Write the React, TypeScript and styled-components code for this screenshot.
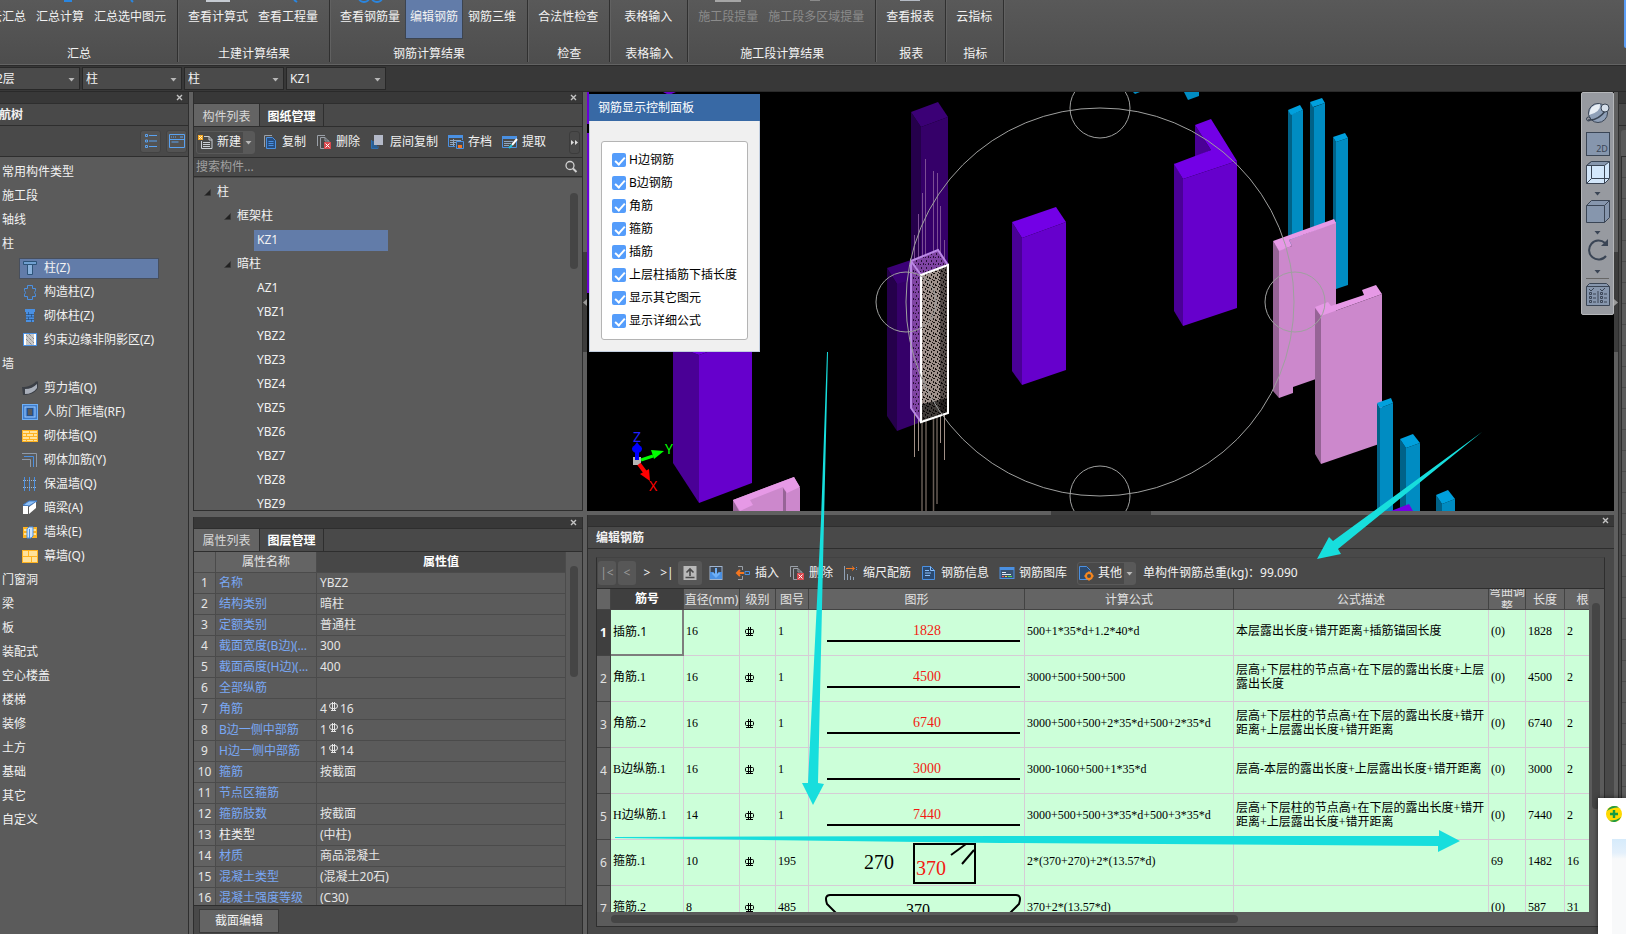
import React from "react";
import styled, { createGlobalStyle, css } from "styled-components";

const c = {
  line: "#2e2e2e",
  strip: "#383838",
  bar: "#494949",
  body: "#5b5b5b",
  head: "#646464",
  grid: "#4b4b4b",
  text: "#f2f2f2",
  select: "#627ca9",
  blue: "#4a90e2",
  link: "#79a8f5",
  mint: "#ccffd9",
  cyan: "#17dedd",
};

const ui = `"Noto Sans", "Noto Sans CJK SC", sans-serif`;
const song = `"Liberation Serif", "Noto Sans CJK SC", serif`;

const Global = createGlobalStyle`
  * { box-sizing: border-box; }
  body { margin: 0; background: ${c.bar}; color: ${c.text}; font: 12px/16px ${ui}; overflow: hidden; }
  button, input, select { font: inherit; color: inherit; margin: 0; }
  button { background: none; border: 0; padding: 0; white-space: nowrap; cursor: pointer; }
  ul { list-style: none; margin: 0; padding: 0; }
  svg { display: block; flex: none; }
`;

/* ---------- page frame ---------- */
const Page = styled.div`
  position: relative;
  display: flex;
  flex-direction: column;
  height: 100vh;
  overflow: hidden;
`;
const Main = styled.main`
  display: flex;
  flex: 1;
  min-height: 0;
  background: #606060;
`;
const Column = styled.div<{ $width?: number }>`
  display: flex;
  flex-direction: column;
  min-width: 0;
  min-height: 0;
  ${(p) => (p.$width ? `flex: 0 0 ${p.$width}px;` : "flex: 1;")}
`;
const Half = styled.section`
  display: flex;
  flex-direction: column;
  flex: 1 1 0;
  min-height: 0;
  border: 1px solid ${c.line};
  border-top: 0;
  background: ${c.bar};
  &:last-child { border-bottom: 0; }
`;
const RowSplit = styled.div<{ $grip?: boolean }>`
  flex: 0 0 ${(p) => (p.$grip ? 4 : 6)}px;
  display: flex;
  justify-content: center;
  background: #606060;
  ${(p) => p.$grip && css`&::before { content: ""; width: 100px; background: #3e3e3e; }`}
`;
const ColSplit = styled.div`
  flex: 0 0 4px;
  padding-top: 160px;
  background: #5f5f5f;
`;
const ColGrip = styled.div`
  display: flex;
  align-items: center;
  height: 100px;
  background: #3c3c3c;
`;

/* ---------- ribbon ---------- */
const Ribbon = styled.header`
  display: flex;
  flex: 0 0 66px;
  overflow: hidden;
  background: linear-gradient(#595959, #4d4d4d);
  border-bottom: 1px solid #2a2a2a;
  box-shadow: inset 0 -1px #636363;
`;
const Group = styled.div<{ $bleed?: boolean; $wide?: boolean }>`
  flex: none;
  display: flex;
  flex-direction: column;
  justify-content: space-between;
  height: 62px;
  min-width: ${(p) => (p.$bleed ? 197 : p.$wide ? 78 : 58)}px;
  margin-left: ${(p) => (p.$bleed ? -20 : 0)}px;
  padding: 0 6px 0 5px;
  border-right: 1px solid #303030;
  box-shadow: 1px 0 #616161;
  text-align: center;
`;
const Commands = styled.div<{ $end?: boolean }>`
  display: flex;
  justify-content: ${(p) => (p.$end ? "flex-end" : "center")};
`;
const Command = styled.button<{ $active?: boolean }>`
  display: flex;
  flex-direction: column;
  align-items: center;
  height: 39px;
  padding: 0 4px;
  border: solid transparent;
  border-width: 0 1px 1px;
  color: ${c.text};
  ${(p) => p.$active && css`background: ${c.select}; border-color: #3c4450;`}
  &:disabled { color: #8b8b8b; }
`;
const CommandIcon = styled.span`
  height: 9px;
`;
const GroupName = styled.div`
  padding-left: 2px;
  line-height: 16px;
`;
const EdgeTab = styled.div`
  width: 2px;
  height: 48px;
  margin-left: auto;
  background: #5b9df5;
  border-bottom-left-radius: 2px;
`;

/* ---------- selector bar ---------- */
const Selectors = styled.div`
  display: flex;
  gap: 2px;
  flex: 0 0 26px;
  margin-left: -20px;
  padding: 1px 0;
  background: ${c.strip};
  border-bottom: 1px solid #2a2a2a;
`;
const PickBox = styled.label`
  position: relative;
  flex: 0 0 100px;
  height: 23px;
  & > svg { position: absolute; right: 5px; top: 10px; }
`;
const Pick = styled.select`
  display: block;
  appearance: none;
  width: 100%;
  height: 23px;
  padding: 0 16px 0 3px;
  background: #4a4a4a;
  border: 1px solid #282828;
  border-radius: 0;
`;

/* ---------- panels ---------- */
const Strip = styled.div`
  display: flex;
  justify-content: flex-end;
  align-items: center;
  flex: 0 0 12px;
  padding-right: 5px;
  background: ${c.strip};
  border-bottom: 1px solid ${c.line};
`;
const CloseButton = styled.button`
  width: 7px;
  height: 7px;
`;
const PanelTitle = styled.h2<{ $indent: number }>`
  flex: 0 0 22px;
  margin: 0;
  padding-left: ${(p) => p.$indent}px;
  font-size: 12px;
  font-weight: 700;
  line-height: 21px;
  white-space: nowrap;
  border-bottom: 1px solid ${c.line};
`;
const Tabs = styled.div`
  display: flex;
  flex: 0 0 23px;
  border-bottom: 1px solid ${c.line};
`;
const Tab = styled.button<{ $on?: boolean }>`
  height: 22px;
  width: 65px;
  padding-top: 3px;
  color: ${(p) => (p.$on ? "#d8d8d8" : "#fff")};
  font-weight: ${(p) => (p.$on ? 400 : 700)};
  ${(p) => (p.$on ? css`background: ${c.head};` : css`border: solid ${c.line}; border-width: 0 1px;`)}
`;
const Tools = styled.div`
  display: flex;
  align-items: center;
  gap: 10px;
  flex: 0 0 30px;
  padding: 0 2px;
`;
const Tool = styled.button`
  display: flex;
  align-items: center;
  gap: 4px;
`;
const SplitTool = styled.button`
  display: flex;
  align-items: center;
  gap: 4px;
  height: 23px;
  border-radius: 3px;
  border: 1px solid #595959;
  margin-right: -3px;
`;
const SplitArrow = styled.span`
  display: flex;
  align-items: center;
  justify-content: center;
  width: 11px;
  height: 21px;
  margin-left: -2px;
  background: #595959;
`;
const More = styled.button`
  display: flex;
  align-items: center;
  justify-content: center;
  width: 11px;
  height: 23px;
  margin-left: auto;
  border: 1px solid #3c3c3c;
  border-radius: 3px;
`;
const Search = styled.label`
  display: flex;
  align-items: center;
  flex: 0 0 20px;
  padding: 0 3px 0 2px;
  border: solid ${c.line};
  border-width: 1px 0;
`;
const SearchInput = styled.input`
  flex: 1;
  min-width: 0;
  padding: 0;
  border: 0;
  outline: 0;
  background: none;
  &::placeholder { color: #a0a0a0; }
`;
const Scroller = styled.div<{ $top: number; $size: number }>`
  flex: 0 0 12px;
  padding-top: ${(p) => p.$top}px;
  &::before {
    content: "";
    display: block;
    width: 8px;
    height: ${(p) => p.$size}px;
    border-radius: 4px;
    background: #454545;
  }
`;

/* ---------- navigation ---------- */
const Nav = styled.nav`
  display: flex;
  flex-direction: column;
  flex: 0 0 189px;
  margin-right: 4px;
  overflow: hidden;
  background: ${c.bar};
  border-right: 1px solid ${c.line};
`;
const NavTitle = styled.span`
  display: block;
  margin-left: -13px;
`;
const NavTools = styled.div`
  display: flex;
  justify-content: flex-end;
  align-items: center;
  gap: 5px;
  flex: 0 0 31px;
  padding-right: 1px;
  border-bottom: 1px solid ${c.line};
`;
const SquareButton = styled.button`
  display: flex;
  align-items: center;
  justify-content: center;
  width: 21px;
  height: 23px;
  background: #535353;
  border: 1px solid #424242;
  border-radius: 3px;
`;
const NavList = styled.ul`
  flex: 1;
  padding: 3px 0 0 2px;
  background: ${c.body};
`;
const NavRow = styled.li`
  display: flex;
  align-items: center;
  height: 24px;
`;
const NavItem = styled.button<{ $on?: boolean }>`
  display: flex;
  align-items: center;
  gap: 6px;
  height: 21px;
  min-width: 140px;
  margin-left: 17px;
  padding-left: 2px;
  border: 1px solid ${(p) => (p.$on ? "#474f5d" : "transparent")};
  background: ${(p) => (p.$on ? c.select : "none")};
`;

/* ---------- component tree ---------- */
const TreeArea = styled.div`
  display: flex;
  flex: 1;
  min-height: 0;
  margin-top: 1px;
  overflow: hidden;
  background: ${c.body};
`;
const Tree = styled.ul`
  flex: 1;
  padding-top: 2px;
`;
const TreeRow = styled.li<{ $level: number }>`
  display: flex;
  align-items: center;
  gap: 6px;
  height: 24px;
  padding-left: ${(p) => p.$level * 20 - 10}px;
`;
const Leaf = styled.button<{ $on?: boolean }>`
  width: 134px;
  height: 21px;
  margin-left: 10px;
  padding-left: 3px;
  text-align: left;
  background: ${(p) => (p.$on ? c.select : "none")};
`;

/* ---------- property table ---------- */
const PropArea = styled.div`
  display: flex;
  flex: 1;
  min-height: 0;
  overflow: hidden;
  background: ${c.body};
  border-bottom: 1px solid ${c.line};
`;
const PropWrap = styled.div`
  flex: 1;
  margin-right: 4px;
`;
const PropTable = styled.table`
  width: 100%;
  table-layout: fixed;
  border-spacing: 0;
  th, td {
    height: 21px;
    padding: 0 0 0 3px;
    border: solid ${c.grid};
    border-width: 0 1px 1px 0;
    overflow: hidden;
    white-space: nowrap;
    text-overflow: ellipsis;
    text-align: left;
    font-weight: 400;
    color: #e6e6e6;
  }
  thead th { background: ${c.head}; text-align: center; padding: 0; }
  thead th:last-child { background: #474747; font-weight: 700; color: #fff; }
  tbody th { background: #626262; text-align: center; padding: 0; }
`;
const PropName = styled.td<{ $plain?: boolean }>`
  && { color: ${(p) => (p.$plain ? "#f2f2f2" : c.link)}; }
`;
const Amount = styled.span`
  display: flex;
  align-items: center;
  gap: 2px;
  height: 16px;
  & > svg { margin-bottom: 3px; }
`;
const Footer = styled.div`
  flex: 0 0 28px;
  padding: 3px 5px 0;
`;
const FooterButton = styled.button`
  display: block;
  width: 80px;
  height: 24px;
  background: ${c.head};
  border: 1px solid #3a3a3a;
`;

/* ---------- 3D view ---------- */
const View = styled.section`
  position: relative;
  flex: 1 1 0;
  min-height: 0;
  background: #000;
  overflow: hidden;
`;
const Scene = styled.svg`
  width: 100%;
  height: 100%;
`;
const Dialog = styled.div`
  position: absolute;
  left: 2px;
  top: 2px;
  width: 171px;
  padding-bottom: 11px;
  background: #f0f0f0;
  border: 1px solid #c3cfe0;
  border-top: 0;
  color: #000;
`;
const DialogTitle = styled.h2`
  margin: 0 -1px 20px;
  padding-left: 9px;
  background: #3869a5;
  color: #fff;
  font-size: 12px;
  font-weight: 400;
  line-height: 27px;
`;
const Options = styled.div`
  margin: 0 11px;
  padding: 6px 0 7px 10px;
  background: #fff;
  border: 1px solid #b4b4b4;
  border-radius: 3px;
`;
const Option = styled.label`
  display: flex;
  align-items: center;
  gap: 3px;
  height: 23px;
  white-space: nowrap;
`;
const Check = styled.input`
  appearance: none;
  position: relative;
  width: 14px;
  height: 14px;
  border-radius: 2px;
  background: #559dfb;
  &:checked::after {
    content: "";
    position: absolute;
    left: 5px;
    top: 2px;
    width: 4px;
    height: 8px;
    border: solid #fff;
    border-width: 0 2px 2px 0;
    transform: rotate(42deg);
  }
`;
const ViewTools = styled.div`
  position: absolute;
  right: 0;
  top: 0;
  display: flex;
  flex-direction: column;
  align-items: center;
  width: 33px;
  padding: 8px 0 4px;
  background: #979aa0;
  border: 1px solid #b5b7ba;
  border-radius: 2px;
`;
const ViewButton = styled.button`
  margin-bottom: 4px;
  &:first-child { margin-bottom: 7px; }
`;
const ViewMore = styled.button`
  display: flex;
  align-items: center;
  height: 11px;
`;
const ViewRule = styled.hr`
  width: 23px;
  margin: 1px 0 3px;
  border: 0;
  border-top: 1px solid #666;
`;

/* ---------- rebar editor ---------- */
const Editor = styled.section`
  display: flex;
  flex-direction: column;
  flex: 1 1 0;
  min-height: 0;
  background: ${c.bar};
  border-left: 1px solid ${c.line};
`;
const EditorBox = styled.div`
  display: flex;
  flex-direction: column;
  flex: 1;
  min-height: 0;
  margin: 8px 9px 7px 8px;
  border: 1px solid ${c.line};
  border-top-color: #424242;
`;
const Steps = styled.div`
  display: flex;
  gap: 2px;
  margin: 0 -3px 0 -1px;
`;
const Step = styled.button<{ $raised?: boolean; $wide?: boolean }>`
  display: flex;
  align-items: center;
  justify-content: center;
  width: ${(p) => (p.$wide ? 24 : 18)}px;
  height: 24px;
  border-radius: 3px;
  background: ${(p) => (p.$raised ? "#575757" : "none")};
  &:disabled { color: #9a9a9a; }
`;
const Total = styled.output`
  white-space: nowrap;
`;
const SheetArea = styled.div`
  display: flex;
  flex: 1;
  min-height: 0;
  background: ${c.body};
  border-top: 1px solid ${c.line};
`;
const SheetClip = styled.div`
  flex: 1;
  min-width: 0;
  overflow: hidden;
  margin-right: 3px;
`;
const Sheet = styled.table`
  width: calc(100% + 24px);
  table-layout: fixed;
  border-spacing: 0;
  th {
    height: 21px;
    padding: 0;
    border: solid #434343;
    border-width: 0 1px 1px 0;
    background: ${c.head};
    color: #e2e2e2;
    font-weight: 400;
    white-space: nowrap;
  }
  td {
    height: 46px;
    padding: 0 2px 4px;
    border: solid #d6ccd6;
    border-width: 0 1px 1px 0;
    background: ${c.mint};
    color: #000;
    font: 12px/14px ${song};
  }
`;
const HeadText = styled.div<{ $wrap?: boolean }>`
  display: flex;
  align-items: center;
  justify-content: center;
  height: 20px;
  line-height: 15px;
  overflow: hidden;
  white-space: ${(p) => (p.$wrap ? "normal" : "nowrap")};
  text-align: center;
`;
const CurrentHead = styled.th`
  && { background: #3f3f3f; color: #fff; font-weight: 700; }
`;
const CurrentCell = styled.td`
  && { font: 12px/14px ${ui}; border: solid #7d7d7d; border-width: 0 2px 2px 0; padding-bottom: 0; }
`;
const NameCell = styled.td`
  white-space: nowrap;
`;
const FigureCell = styled.td`
  && { padding: 0; }
`;
const GradeSlot = styled.span`
  display: block;
  padding: 2px 0 0 3px;
`;
const BottomScroll = styled.div`
  flex: 0 0 14px;
  padding: 3px 14px 0;
  background: ${c.body};
  &::before {
    content: "";
    display: block;
    width: 64%;
    height: 8px;
    border-radius: 4px;
    background: #454545;
  }
`;

/* ---------- right dock and overlays ---------- */
const Dock = styled.aside`
  flex: 0 0 8px;
  display: flex;
  flex-direction: column;
  overflow: hidden;
  background: ${c.bar};
  border-left: 1px solid ${c.line};
`;
const DockHead = styled.div`
  flex: 0 0 22px;
  border-bottom: 1px solid ${c.line};
`;
const DockTab = styled.div`
  height: 26px;
  margin: 4px 0 0 2px;
  background: #5a5a5a;
  border-radius: 3px 0 0 0;
`;
const DockRows = styled.div`
  flex: 1;
  margin-left: 2px;
  border-left: 1px solid ${c.line};
  border-top: 1px solid ${c.line};
  background: repeating-linear-gradient(${c.body} 0 20px, ${c.grid} 20px 21px);
`;
const Notes = styled.svg`
  position: absolute;
  inset: 0;
  width: 100%;
  height: 100%;
  pointer-events: none;
`;
const Toast = styled.div`
  position: absolute;
  right: 0;
  bottom: 0;
  width: 28px;
  height: 136px;
  padding: 8px 0 0 8px;
  background: #fff;
  box-shadow: 0 0 5px #0009;
`;
const ToastBody = styled.div`
  height: 100px;
  margin: 17px 0 0 6px;
  background: linear-gradient(#d6ebfb, #e4f0fb 14px, #f8f9fa 20px);
`;

/* ---------- small drawings ---------- */
const Caret = ({ color = "#b8b8b8" }: { color?: string }) => (
  <svg width="7" height="5" viewBox="0 0 7 5"><path d="M.5 1h6L3.500 4.500z" fill={color} /></svg>
);
const Cross = () => (
  <svg width="7" height="7" viewBox="0 0 7 7"><path d="M1 1l5 5M6 1L1 6" stroke="#c4c4c4" strokeWidth="1.400" fill="none" /></svg>
);
const Fold = () => (
  <svg width="7" height="7" viewBox="0 0 7 7"><path d="M6.500 .5v6h-6z" fill="#222" stroke="#3a3a3a" strokeWidth=".5" /></svg>
);
const Grade = ({ color }: { color: string }) => (
  <svg width="10" height="12" viewBox="0 0 10 12" fill="none" stroke={color}>
    <rect x=".5" y="3.500" width="8" height="4" rx="1" />
    <path d="M3.500 1v9M5.500 1v9M1 9.500h7" />
  </svg>
);
const GradeMark = () => (
  <svg width="9" height="12" viewBox="0 0 9 12" fill="none" stroke="#e6e6e6">
    <rect x=".5" y="2.500" width="8" height="5" rx="2.500" />
    <path d="M3.500 1v8.500M5.500 1v8.500M2 9.500h5" />
  </svg>
);

const icons: Record<string, React.ReactNode> = {
  fresh: <><path d="M7 2.500h5l3 3v9H4.500V7" stroke="#c9ced4" fill="none" /><path d="M12 2v4h3M6 8.500h7M6 10.500h7M6 12.500h7" stroke="#c9ced4" fill="none" /><rect x="1" y="1" width="5" height="5" fill="#f5a623" /><path d="M2 2h1v1H2zM4 2h1v1H4zM3 3h1v1H3zM2 4h1v1H2zM4 4h1v1H4z" fill="#fff3c4" /></>,
  copy: <><path d="M2.500 13V1.500H10" stroke="#9aa0a8" fill="none" /><path d="M4.500 3.500h6l3 3v8h-9z" fill="#274e80" stroke={c.blue} /><path d="M6.500 7.500h5M6.500 9.500h5M6.500 11.500h5" stroke={c.blue} /></>,
  remove: <><path d="M1.500 12V1.500H9M8 14.500H4.500v-11H9l4 4V9M9 3.500V7h4" stroke="#9aa0a8" fill="none" /><rect x="8" y="8" width="7" height="7" fill="#d9484e" /><path d="M9.500 9.500l4 4m0-4l-4 4" stroke="#fff" /></>,
  floors: <><path d="M1.500 6v8.500H8V12" fill="none" stroke="#2d6fb0" /><path d="M2 7h5v7H2z" fill="#2b5f93" /><rect x="4" y="1" width="9" height="10" fill="#b4b9c8" /></>,
  save: <><path d="M0 1h15v3H0z" fill={c.blue} /><path d="M.5 4v8.500H7M14.500 4v2" stroke={c.blue} fill="none" /><path d="M2 6.500h11M2 8.500h6M2 10.500h5M5.500 5v7" stroke="#8fa6c0" /><path d="M8.500 7.500h7v7h-7z" fill="#3d4a5c" stroke={c.blue} /><rect x="10" y="11" width="4" height="3" fill="#f5761f" /></>,
  extract: <><path d="M0 2h15v3H0z" fill={c.blue} /><path d="M.5 5v8.500h14V5" stroke={c.blue} fill="none" /><path d="M2 7.500h9M2 9.500h7M2 11.500h5" stroke="#8fa6c0" /><path d="M15 5l-5 6" stroke="#fff" strokeWidth="2" /><path d="M10 11l-3 3" stroke="#27c3d8" strokeWidth="2" /></>,
  search: <><circle cx="7" cy="6.500" r="4" fill="none" stroke="#d0d0d0" strokeWidth="1.300" /><path d="M10 9.500l3.500 3.500" stroke="#d0d0d0" strokeWidth="2" /></>,
  list: <path d="M2.500 1.500h2v2h-2zM2.500 7h2v2h-2zM2.500 12.500h2v2h-2zM6 2.500h8M6 8h8M6 13.500h8" fill="none" stroke="#5aa2f0" />,
  card: <path d="M.5 1.500h15v13H.5zM.5 6.500h15M2 4h1M4 4h1M6 4h1M11 4h3M2.500 9h7" fill="none" stroke="#5aa2f0" />,
  column: <><path d="M1.500 1.500h13v3h-13z" fill="#6f9fd0" stroke="#2d5378" /><path d="M5.500 4.500h5v10h-5z" fill="#8ab2dc" stroke="#2d5378" /></>,
  built: <path d="M5.500 1.500h5v3h3v2l-1 2 1 2v2h-3v3h-5v-3h-3v-2l1-2-1-2v-2h3z" fill="none" stroke={c.blue} />,
  brick: <><path d="M3 1h10v3H3zM4 4h8v10H4z" fill={c.blue} /><path d="M4 6.500h8M4 9h8M4 11.500h8M6.500 4v3M9.500 6v3M6.500 9v3M9.500 11v3" stroke="#284d78" strokeWidth=".7" /></>,
  hatch: <><rect x="1.500" y="1.500" width="13" height="12" fill="#fff" stroke={c.blue} /><rect x="4" y="2" width="8" height="11" fill="#c8c8c8" /><path d="M4 3l8 8M4 7l6 6M7 2l5 5" stroke="#6b6b6b" strokeDasharray="1 1" /></>,
  shear: <><path d="M0 7C6 7 11 5 14 1.500h2V8c-3 5-8 7-15 7z" fill="#3b3f46" /><path d="M3 9c5 0 9-2 12-5v4c-3 4-7 6-12 6z" fill="#a9afba" /></>,
  frame: <><rect x=".5" y=".5" width="15" height="15" fill="#3f7ccb" stroke="#6fb0f7" /><rect x="3" y="3" width="10" height="10" fill="none" stroke="#9cc8fa" /><rect x="5.500" y="4.500" width="5" height="7" fill="#5b5b5b" stroke="#27518a" /></>,
  masonry: <><rect x="0" y="2" width="16" height="12" fill="#ffb320" /><path d="M1 3h6v2H1zM8 3h7v2H8zM1 6h3v2H1zM5 6h6v2H5zM12 6h3v2h-3zM1 9h6v2H1zM8 9h7v2H8zM1 12h3v1H1zM5 12h6v1H5zM12 12h3v1h-3z" fill="#ffe29a" /></>,
  corner: <><path d="M0 1.500h14.500V15" fill="none" stroke="#8f9aa8" /><path d="M2 4.500h9.500V15" fill="none" stroke={c.blue} /><path d="M0 7.500h8.500V15" fill="none" stroke="#8f9aa8" /></>,
  insulate: <><path d="M2.500 1v14M7.500 1v14M12.500 1v14" stroke={c.blue} /><path d="M1 4.500h14M1 11.500h14" stroke="#9cb5d0" strokeDasharray="1 1" /></>,
  beam: <><path d="M1 5l6-4h8l-8 5z" fill="#8fc0f5" stroke="#3f7ccb" /><path d="M1 6h5v8H1zM7 7l7-5v6l-7 6z" fill="#fff" /></>,
  pier: <><rect x="1" y="3" width="14" height="11" fill="#ffb320" /><path d="M2 5h3v2H2zM2 9h3v2H2zM11 5h3v2h-3zM11 9h3v2h-3z" fill="#ffe29a" /><path d="M5 5l2-2h4v9l-2 2H5z" fill="#cfe4fb" stroke={c.blue} /><path d="M7.500 5v9" stroke={c.blue} /></>,
  curtain: <><rect x="0" y="2" width="16" height="13" fill="#ffb320" /><path d="M1 3h5v5H1zM7 3h8v5H7zM1 9h8v5H1zM10 9h5v5h-5z" fill="#ffe29a" /></>,
  up: <><rect x="1.500" y="1" width="13" height="14" fill="#b9b9b9" /><path d="M3.500 12.500h9M8 11V4M4.500 7.500L8 4l3.500 3.500" stroke="#4a4a4a" strokeWidth="1.600" fill="none" /></>,
  down: <><rect x="2" y="1.500" width="12" height="13" fill="#3c4654" stroke="#9fb4cf" /><path d="M2 7h3l3 3 3-3h3v7H2z" fill={c.blue} /><path d="M8 3v8M4.500 8L8 11.500 11.500 8" stroke="#6fb0f7" strokeWidth="2" fill="none" /></>,
  insert: <><path d="M3 1.500h4.500V5M3 14.500h4.500V11" stroke="#9aa0a8" fill="none" /><path d="M10 6.500h4.500v3H10z" stroke={c.blue} fill="none" /><path d="M2 8h7M5 5L2 8l3 3" stroke="#f5761f" strokeWidth="2" fill="none" /></>,
  scale: <><path d="M1.500 1v14M4.500 9v6M7.500 11v4M10.500 12v3" stroke="#8fa0b4" /><path d="M3 3.500h8M9 1.500l2.500 2L9 5.500" stroke="#f5761f" fill="none" /><path d="M13.500 2v4" stroke={c.blue} strokeDasharray="1 1" /></>,
  info: <><path d="M1.500 1.500h8l4 4v9h-12z" fill="#2b4a70" stroke={c.blue} /><path d="M9.500 1.500v4h4M4 5.500h4M4 8h6M4 10.500h5" stroke="#8cc0fa" fill="none" /></>,
  library: <><rect x="1" y="2.500" width="14" height="11" fill="#3a5270" stroke={c.blue} /><path d="M1 2h14v3H1z" fill={c.blue} /><path d="M3 7.500h4M3 9.500h9" stroke="#dfe9f5" /><path d="M3 11.500h2" stroke="#f55" /><path d="M6 11.500h2" stroke="#fc3" /><path d="M9 11.500h4" stroke="#5d5" /></>,
  other: <><path d="M1.500 1.500h7l4 4v9h-11z" fill="#2b4a70" stroke={c.blue} /><circle cx="11" cy="11" r="3" fill="#4a4a4a" stroke="#f5861f" strokeWidth="2" /><path d="M11 6.500v2M11 13.500v2M6.500 11h2M13.500 11h2" stroke="#f5861f" strokeWidth="2" /></>,
};
const Icon = ({ name }: { name: string }) => (
  <svg width="16" height="16" viewBox="0 0 16 16" aria-hidden="true">{icons[name]}</svg>
);

const Close = () => (
  <Strip><CloseButton aria-label="关闭"><Cross /></CloseButton></Strip>
);

/* ---------- data ---------- */
type Cmd = { label: string; active?: boolean; disabled?: boolean; art?: React.ReactNode };
const top = (d: string, color: string) => <svg width="28" height="4" viewBox="0 0 28 4"><path d={d} fill="none" stroke={color} strokeWidth="2" /></svg>;
const groups: { name: string; wide?: boolean; items: Cmd[] }[] = [
  { name: "汇总", items: [{ label: "云汇总" }, { label: "汇总计算", art: top("M18 1h8", "#2a86e0") }, { label: "汇总选中图元", art: top("M15 0l2 2", "#2a86e0") }] },
  { name: "土建计算结果", items: [{ label: "查看计算式", art: top("M2 1h24", "#c6cbd2") }, { label: "查看工程量", art: top("M20 0l3 2", "#2a86e0") }] },
  { name: "钢筋计算结果", items: [{ label: "查看钢筋量", art: top("M3 -2a5 4 0 0 0 10 0M16 -2a5 4 0 0 0 10 0", "#2a86e0") }, { label: "编辑钢筋", active: true }, { label: "钢筋三维" }] },
  { name: "检查", items: [{ label: "合法性检查" }] },
  { name: "表格输入", wide: true, items: [{ label: "表格输入" }] },
  { name: "施工段计算结果", items: [{ label: "施工段提量", disabled: true, art: top("M1 1h26", "#a5a5a5") }, { label: "施工段多区域提量", disabled: true, art: top("M8 0h10", "#8a8a8a") }] },
  { name: "报表", items: [{ label: "查看报表", art: top("M4 0h20", "#b4bac4") }] },
  { name: "指标", items: [{ label: "云指标" }] },
];

const navigation: { label: string; icon?: string }[] = [
  { label: "常用构件类型" }, { label: "施工段" }, { label: "轴线" }, { label: "柱" },
  { label: "柱(Z)", icon: "column" }, { label: "构造柱(Z)", icon: "built" }, { label: "砌体柱(Z)", icon: "brick" },
  { label: "约束边缘非阴影区(Z)", icon: "hatch" }, { label: "墙" },
  { label: "剪力墙(Q)", icon: "shear" }, { label: "人防门框墙(RF)", icon: "frame" }, { label: "砌体墙(Q)", icon: "masonry" },
  { label: "砌体加筋(Y)", icon: "corner" }, { label: "保温墙(Q)", icon: "insulate" }, { label: "暗梁(A)", icon: "beam" },
  { label: "墙垛(E)", icon: "pier" }, { label: "幕墙(Q)", icon: "curtain" },
  { label: "门窗洞" }, { label: "梁" }, { label: "板" }, { label: "装配式" }, { label: "空心楼盖" }, { label: "楼梯" },
  { label: "装修" }, { label: "土方" }, { label: "基础" }, { label: "其它" }, { label: "自定义" },
];

const tree: [number, string][] = [
  [1, "柱"], [2, "框架柱"], [3, "KZ1"], [2, "暗柱"], [3, "AZ1"], [3, "YBZ1"], [3, "YBZ2"], [3, "YBZ3"],
  [3, "YBZ4"], [3, "YBZ5"], [3, "YBZ6"], [3, "YBZ7"], [3, "YBZ8"], [3, "YBZ9"],
];

const properties: [string, string, string?][] = [
  ["名称", "YBZ2"], ["结构类别", "暗柱"], ["定额类别", "普通柱"], ["截面宽度(B边)(mm)", "300"], ["截面高度(H边)(mm)", "400"],
  ["全部纵筋", ""], ["角筋", "4", "16"], ["B边一侧中部筋", "1", "16"], ["H边一侧中部筋", "1", "14"], ["箍筋", "按截面"],
  ["节点区箍筋", ""], ["箍筋肢数", "按截面"], ["柱类型", "(中柱)"], ["材质", "商品混凝土"], ["混凝土类型", "(混凝土20石)"],
  ["混凝土强度等级", "(C30)"],
];

const options = ["H边钢筋", "B边钢筋", "角筋", "箍筋", "插筋", "上层柱插筋下插长度", "显示其它图元", "显示详细公式"];

const rebars = [
  { name: "插筋.1", d: 16, no: 1, fig: "1828", formula: "500+1*35*d+1.2*40*d", note: "本层露出长度+错开距离+插筋锚固长度", bend: "(0)", len: 1828, n: 2 },
  { name: "角筋.1", d: 16, no: 1, fig: "4500", formula: "3000+500+500+500", note: "层高+下层柱的节点高+在下层的露出长度+上层露出长度", bend: "(0)", len: 4500, n: 2 },
  { name: "角筋.2", d: 16, no: 1, fig: "6740", formula: "3000+500+500+2*35*d+500+2*35*d", note: "层高+下层柱的节点高+在下层的露出长度+错开距离+上层露出长度+错开距离", bend: "(0)", len: 6740, n: 2 },
  { name: "B边纵筋.1", d: 16, no: 1, fig: "3000", formula: "3000-1060+500+1*35*d", note: "层高-本层的露出长度+上层露出长度+错开距离", bend: "(0)", len: 3000, n: 2 },
  { name: "H边纵筋.1", d: 14, no: 1, fig: "7440", formula: "3000+500+500+3*35*d+500+3*35*d", note: "层高+下层柱的节点高+在下层的露出长度+错开距离+上层露出长度+错开距离", bend: "(0)", len: 7440, n: 2 },
  { name: "箍筋.1", d: 10, no: 195, fig: "stirrup", formula: "2*(370+270)+2*(13.57*d)", note: "", bend: "69", len: 1482, n: 16 },
  { name: "箍筋.2", d: 8, no: 485, fig: "tie", formula: "370+2*(13.57*d)", note: "", bend: "(0)", len: 587, n: 31 },
];

const Figure = ({ kind }: { kind: string }) => (
  <svg width="100%" height="45" viewBox="0 0 215 45" fontFamily={song} preserveAspectRatio="xMidYMid meet">
    {kind === "stirrup" ? (
      <>
        <text x="55" y="29" fontSize="20">270</text>
        <rect x="105" y="4" width="61" height="39" fill="none" stroke="#000" strokeWidth="2" />
        <path d="M142 15l15-11M153 24l12-14" stroke="#000" strokeWidth="2" />
        <text x="107" y="35" fontSize="20" fill="#f21b12">370</text>
      </>
    ) : kind === "tie" ? (
      <>
        <path d="M27 27l-9-9q-3-9 3-9h186q6 0 3 9l-9 9" fill="none" stroke="#000" strokeWidth="2" />
        <text x="97" y="29" fontSize="16">370</text>
      </>
    ) : (
      <>
        <text x="118" y="25" fontSize="14" fill="#f21b12" textAnchor="middle">{kind}</text>
        <path d="M18 31h193" stroke="#000" strokeWidth="2" />
      </>
    )}
  </svg>
);

/* ---------- model drawing ---------- */
const violet = { top: "#7300e6", side: "#4a0096", face: "#6600cc" };
const dusk = { top: "#3b0076", side: "#25004b", face: "#350069" };
const azure = { top: "#00a0dd", side: "#006288", face: "#008cc2" };
const rose = { top: "#e699e6", side: "#966496", face: "#cc88cc" };
type Tint = typeof violet;
const Solid = ({ tint, top: t, side, face }: { tint: Tint; top: string; side: string; face: string }) => (
  <>
    <polygon points={side} fill={tint.side} />
    <polygon points={face} fill={tint.face} />
    <polygon points={t} fill={tint.top} />
  </>
);

const Model = () => (
  <Scene viewBox="587 92 1027 419" preserveAspectRatio="xMinYMin slice" role="img" aria-label="钢筋三维模型">
    <defs>
      <pattern id="mesh" width="6" height="7" patternUnits="userSpaceOnUse">
        <rect width="6" height="7" fill="#9f918b" />
        <path d="M1 1h1v2H1zM3 0h2v1H3zM0 5h1v1H0zM3 3h1v2H3zM5 4h1v2H5zM2 6h1v1H2z" fill="#15110f" />
      </pattern>
      <pattern id="mesh2" width="5" height="7" patternUnits="userSpaceOnUse">
        <rect width="5" height="7" fill="#7f44a3" />
        <path d="M1 1h1v2H1zM3 4h1v2H3zM0 5h1v1H0z" fill="#2a0f3a" />
      </pattern>
    </defs>
    <path d="M587 92h2v32h-2zM587 133h2v160h-2z" fill="#6a00d4" />
    <polygon points="663,92 676,92 669,95" fill="#6600cc" />
    <Solid tint={dusk} side="911,112 921,127 921,275 911,262" face="921,127 948,117 948,266 921,275" top="911,112 938,102 948,117 921,127" />
    <Solid tint={dusk} side="887,268 897,284 897,431 887,416" face="897,283 911,278 921,280 921,422 897,431" top="887,268 911,260 913,279 897,284" />
    <path d="M914.500 235v25M918.500 214v45M922.500 193v65M925.500 159v97M933.500 171v82M937.500 173v80M940.500 206v50M944.500 240v20" stroke="#7b4d94" />
    <path d="M914.500 413v44M918.500 418v33M940.500 416v27M944.500 414v46" stroke="#a08f86" />
    <path d="M922 421v90M926 421v90M933.500 418v93M937 417v87" stroke="#665b54" strokeWidth="1.500" />
    <polygon points="911,261 921,275 921,422 911,408" fill="url(#mesh2)" />
    <polygon points="911,261 938,250 948,265 921,275" fill="url(#mesh2)" />
    <polygon points="921,275 948,265 948,413 921,422" fill="url(#mesh)" />
    <path d="M940 268l8-3v148l-8 3z" fill="#000" opacity=".45" />
    <path d="M922 404l26-6v15l-26 9z" fill="#000" opacity=".6" />
    <path d="M921 275l-10-14v147l10 14M911 261l27-11 10 15" fill="none" stroke="#bb88e6" strokeWidth="2" />
    <path d="M921 275l27-10v148l-27 9z" fill="none" stroke="#fff" strokeWidth="2" />
    <Solid tint={violet} side="1012,222 1022,238 1022,385 1012,371" face="1022,238 1066,222 1066,370 1022,385" top="1012,222 1056,207 1066,222 1022,238" />
    <Solid tint={violet} side="673,345 699,355 699,503 673,463" face="699,355 752,336 752,483 699,503" top="673,345 752,320 752,336 699,355" />
    <polygon points="733,500 794,477 800,488 800,511 733,511" fill={rose.face} />
    <polygon points="733,500 739,511 733,511" fill={rose.side} />
    <polygon points="733,500 794,477 800,487 787,493 783,487 750,500 753,505 740,511" fill={rose.top} />
    <polygon points="783,488 786,492 786,511 783,511" fill={rose.side} />
    <polygon points="1195,125 1211,150 1195,157" fill={violet.side} />
    <Solid tint={violet} side="1174,163 1183,179 1183,326 1174,311" face="1183,179 1237,161 1237,308 1183,326" top="1195,125 1211,119 1237,161 1183,179 1174,164 1211,150" />
    <Solid tint={azure} side="1288,110 1292,114 1292,245 1288,245" face="1292,114 1303,110 1303,240 1292,245" top="1288,110 1300,105 1303,110 1291,115" />
    <Solid tint={azure} side="1310,102 1314,107 1314,240 1310,240" face="1314,107 1325,103 1325,240 1314,240" top="1310,102 1322,98 1325,103 1313,107" />
    <Solid tint={azure} side="1333,137 1336,142 1336,289 1333,285" face="1336,142 1348,138 1348,285 1336,289" top="1333,137 1345,133 1348,138 1336,142" />
    <path d="M1133 92h7l-5 2zM1184 92h15v4l-11 4z" fill={azure.face} />
    <Solid tint={rose} side="1273,241 1279,250 1279,398 1273,391" face="1279,250 1292,246 1289,240 1336,222 1336,372 1293,387 1293,393 1279,398" top="1273,241 1334,219 1336,223 1289,240 1292,246 1279,251" />
    <Solid tint={rose} side="1315,308 1321,316 1321,464 1315,454" face="1321,316 1382,294 1382,443 1321,464" top="1315,307 1328,302 1331,306 1364,295 1362,290 1376,285 1382,294 1321,316" />
    <Solid tint={azure} side="1377,403 1380,408 1380,511 1377,511" face="1380,408 1393,403 1393,511 1380,511" top="1377,403 1391,398 1393,403 1380,408" />
    <Solid tint={azure} side="1400,439 1406,448 1406,511 1400,511" face="1406,448 1420,443 1420,511 1406,511" top="1400,439 1413,434 1420,443 1406,448" />
    <Solid tint={azure} side="1436,495 1442,504 1442,511 1436,511" face="1442,504 1455,499 1455,511 1442,511" top="1436,495 1448,490 1455,499 1442,504" />
    <polygon points="1391,511 1409,504 1413,511" fill={violet.top} />
    <g fill="none" stroke="#9fa09f">
      <circle cx="1100" cy="302" r="194" />
      <circle cx="1100" cy="108" r="30" />
      <circle cx="1100" cy="496" r="30" />
      <circle cx="906" cy="302" r="30" />
      <circle cx="1295" cy="302" r="30" />
    </g>
    <rect x="633" y="457" width="8" height="8" fill="#b5b5b5" />
    <path d="M637 460v-12" stroke="#00f" strokeWidth="4" />
    <ellipse cx="637" cy="449" rx="5" ry="4" fill="#00f" />
    <polygon points="637,442 642,449 632,449" fill="#00f" />
    <path d="M641 460l12-4" stroke="#0f0" strokeWidth="3" />
    <polygon points="664,451 651,450 654,459" fill="#0f0" />
    <path d="M639 464l6 8" stroke="#f00" strokeWidth="4" />
    <polygon points="650,481 640,474 649,469" fill="#f00" />
    <g fontFamily={ui} fontSize="14" textAnchor="middle">
      <text x="637" y="442" fill="#2020ff">Z</text>
      <text x="669" y="454" fill="#0f0">Y</text>
      <text x="653" y="491" fill="#f00">X</text>
    </g>
  </Scene>
);

const ink = "#3a4555";
const steel = "#8696ad";
const viewIcons: [string, React.ReactNode, boolean][] = [
  ["动态观察", <><circle cx="12" cy="12" r="9.500" fill="#8fa0b8" stroke={ink} /><path d="M3 14q1-11 11-11 1 8-11 11z" fill="#e9eff6" /><path d="M2 19q10 1 18-10" stroke={ink} strokeWidth="1.500" fill="none" /><circle cx="2.500" cy="18" r="2" fill="none" stroke={ink} /><circle cx="19" cy="7" r="4" fill="#d5deea" stroke={ink} /></>, false],
  ["二维", <><rect x=".5" y=".5" width="23" height="23" fill={steel} stroke={ink} /><text x="16" y="20" fontSize="9" fill={ink} textAnchor="middle" fontFamily={ui}>2D</text></>, false],
  ["线框", <><path d="M.5 5.500l5-4h18v17l-5 5H.5z" fill="#d3e7fb" stroke={ink} /><path d="M.5 5.500l5-4h18l-5 4z" fill={steel} stroke={ink} /><path d="M5.500 6v12.500h13M18.500 5.500v18M.5 23.500l5-5M23 18.500h-5" fill="none" stroke={ink} /></>, true],
  ["实体", <><path d="M.5 6.500l5-5h18v17l-5 5H.5z" fill={steel} stroke={ink} /><path d="M.5 6.500h18v17M18.500 6.500l5-5" fill="none" stroke={ink} /></>, true],
  ["旋转", <><path d="M20 18a9.500 9.500 0 1 1-1-13" fill="none" stroke={ink} strokeWidth="2" /><path d="M22 1v7h-7z" fill={ink} /></>, true],
  ["显示设置", <><path d="M.5 4.500l3-3h17l3 3v19H.5z" fill={steel} stroke={ink} /><path d="M.5 4.500h23M12 9v12" stroke={ink} /><path d="M3.500 10.500h2v2h-2zM3.500 14.500h2v2h-2zM3.500 18.500h2v2h-2zM14.500 10.500h2v2h-2zM14.500 14.500h2v2h-2zM14.500 18.500h2v2h-2zM7 12h3M7 16h3M7 20h3M18 12h3M18 16h3M18 20h3M3 7l2 2 3-3M14 7l2 2 3-3" fill="none" stroke={ink} /></>, false],
];

const picks: [string, string][] = [["楼层", "第2层"], ["类别", "柱"], ["构件类型", "柱"], ["构件", "KZ1"]];

export default function App() {
  return (
    <Page>
      <Global />
      <Ribbon>
        {groups.map((g, i) => (
          <Group key={g.name} $bleed={i === 0} $wide={g.wide}>
            <Commands $end={i === 0}>
              {g.items.map((it) => (
                <Command key={it.label} $active={it.active} disabled={it.disabled}>
                  <CommandIcon>{it.art}</CommandIcon>
                  {it.label}
                </Command>
              ))}
            </Commands>
            <GroupName>{g.name}</GroupName>
          </Group>
        ))}
        <EdgeTab />
      </Ribbon>
      <Selectors>
        {picks.map(([name, value]) => (
          <PickBox key={name}>
            <Pick aria-label={name}><option>{value}</option></Pick>
            <Caret />
          </PickBox>
        ))}
      </Selectors>

      <Main>
        <Nav>
          <Close />
          <PanelTitle $indent={0}><NavTitle>导航树</NavTitle></PanelTitle>
          <NavTools>
            <SquareButton aria-label="列表"><Icon name="list" /></SquareButton>
            <SquareButton aria-label="卡片"><Icon name="card" /></SquareButton>
          </NavTools>
          <NavList>
            {navigation.map((n) => (
              <NavRow key={n.label}>
                {n.icon ? <NavItem $on={n.icon === "column"}><Icon name={n.icon} />{n.label}</NavItem> : <button>{n.label}</button>}
              </NavRow>
            ))}
          </NavList>
        </Nav>

        <Column $width={390}>
          <Half>
            <Close />
            <Tabs><Tab $on>构件列表</Tab><Tab>图纸管理</Tab></Tabs>
            <Tools>
              <SplitTool><Icon name="fresh" />新建<SplitArrow><Caret /></SplitArrow></SplitTool>
              <Tool><Icon name="copy" />复制</Tool>
              <Tool><Icon name="remove" />删除</Tool>
              <Tool><Icon name="floors" />层间复制</Tool>
              <Tool><Icon name="save" />存档</Tool>
              <Tool><Icon name="extract" />提取</Tool>
              <More aria-label="更多">
                <svg width="7" height="7" viewBox="0 0 7 7"><path d="M0 1l3 2.500L0 6zM4 1l3 2.500L4 6z" fill="#ddd" /></svg>
              </More>
            </Tools>
            <Search><SearchInput placeholder="搜索构件..." aria-label="搜索构件" /><Icon name="search" /></Search>
            <TreeArea>
              <Tree>
                {tree.map(([level, label]) => (
                  <TreeRow key={label} $level={level}>
                    {level < 3 ? <><Fold />{label}</> : <Leaf $on={label === "KZ1"}>{label}</Leaf>}
                  </TreeRow>
                ))}
              </Tree>
              <Scroller $top={15} $size={76} />
            </TreeArea>
          </Half>
          <RowSplit />
          <Half>
            <Close />
            <Tabs><Tab $on>属性列表</Tab><Tab>图层管理</Tab></Tabs>
            <PropArea>
              <PropWrap>
                <PropTable>
                  <colgroup><col width="22" /><col width="101" /><col /></colgroup>
                  <thead><tr><th aria-label="序号" /><th>属性名称</th><th>属性值</th></tr></thead>
                  <tbody>
                    {properties.map(([name, value, size], i) => (
                      <tr key={name}>
                        <th>{i + 1}</th>
                        <PropName $plain={name === "柱类型"}>{name}</PropName>
                        <td>{size ? <Amount>{value}<GradeMark />{size}</Amount> : value}</td>
                      </tr>
                    ))}
                  </tbody>
                </PropTable>
              </PropWrap>
              <Scroller $top={14} $size={111} />
            </PropArea>
            <Footer><FooterButton>截面编辑</FooterButton></Footer>
          </Half>
        </Column>

        <ColSplit>
          <ColGrip><svg width="4" height="7" viewBox="0 0 4 7"><path d="M4 0v7L0 3.500z" fill="#9a9a9a" /></svg></ColGrip>
        </ColSplit>

        <Column>
          <View>
            <Model />
            <Dialog role="dialog" aria-label="钢筋显示控制面板">
              <DialogTitle>钢筋显示控制面板</DialogTitle>
              <Options>
                {options.map((o) => (
                  <Option key={o}><Check type="checkbox" defaultChecked />{o}</Option>
                ))}
              </Options>
            </Dialog>
            <ViewTools>
              {viewIcons.map(([name, art, more], i) => (
                <React.Fragment key={name}>
                  {i === 5 && <ViewRule />}
                  <ViewButton aria-label={name}><svg width="24" height="24" viewBox="0 0 24 24">{art}</svg></ViewButton>
                  {more && <ViewMore aria-label={name + "选项"}><Caret color={ink} /></ViewMore>}
                </React.Fragment>
              ))}
            </ViewTools>
          </View>
          <RowSplit $grip />
          <Editor>
            <Close />
            <PanelTitle $indent={8}>编辑钢筋</PanelTitle>
            <EditorBox>
              <Tools>
                <Steps>
                  <Step $raised disabled>|&lt;</Step>
                  <Step $raised disabled>&lt;</Step>
                  <Step>&gt;</Step>
                  <Step>&gt;|</Step>
                  <Step $raised $wide aria-label="上移"><Icon name="up" /></Step>
                  <Step $wide aria-label="下移"><Icon name="down" /></Step>
                </Steps>
                <Tool><Icon name="insert" />插入</Tool>
                <Tool><Icon name="remove" />删除</Tool>
                <Tool><Icon name="scale" />缩尺配筋</Tool>
                <Tool><Icon name="info" />钢筋信息</Tool>
                <Tool><Icon name="library" />钢筋图库</Tool>
                <SplitTool><Icon name="other" />其他<SplitArrow><Caret /></SplitArrow></SplitTool>
                <Total>单构件钢筋总重(kg)：99.090</Total>
              </Tools>
              <SheetArea>
                <SheetClip>
                  <Sheet>
                    <colgroup>
                      <col width="14" /><col width="73" /><col width="56" /><col width="36" /><col width="33" />
                      <col width="216" /><col width="209" /><col /><col width="37" /><col width="39" /><col width="48" />
                    </colgroup>
                    <thead>
                      <tr>
                        <th aria-label="序号" />
                        <CurrentHead>筋号</CurrentHead>
                        {["直径(mm)", "级别", "图号", "图形", "计算公式", "公式描述", "弯曲调整", "长度", "根数"].map((h) => (
                          <th key={h}><HeadText $wrap={h === "弯曲调整"}>{h}</HeadText></th>
                        ))}
                      </tr>
                    </thead>
                    <tbody>
                      {rebars.map((r, i) => (
                        <tr key={r.name}>
                          {i === 0 ? <CurrentHead>1</CurrentHead> : <th>{i + 1}</th>}
                          {i === 0 ? <CurrentCell>{r.name}</CurrentCell> : <NameCell>{r.name}</NameCell>}
                          <td>{r.d}</td>
                          <td><GradeSlot><Grade color="#000" /></GradeSlot></td>
                          <td>{r.no}</td>
                          <FigureCell><Figure kind={r.fig} /></FigureCell>
                          <td>{r.formula}</td>
                          <td>{r.note}</td>
                          <td>{r.bend}</td>
                          <td>{r.len}</td>
                          <td>{r.n}</td>
                        </tr>
                      ))}
                    </tbody>
                  </Sheet>
                </SheetClip>
                <Scroller $top={14} $size={206} />
              </SheetArea>
              <BottomScroll />
            </EditorBox>
          </Editor>
        </Column>

        <ColSplit>
          <ColGrip><svg width="4" height="7" viewBox="0 0 4 7"><path d="M0 0v7l4-3.500z" fill="#9a9a9a" /></svg></ColGrip>
        </ColSplit>
        <Dock>
          <Strip />
          <DockHead />
          <DockTab />
          <DockRows />
        </Dock>
      </Main>

      <Toast>
        <svg width="16" height="16" viewBox="0 0 16 16">
          <circle cx="8" cy="8" r="8" fill="#ffd900" />
          <path d="M1 5A8 8 0 0 1 13 1.500Q6 1 1 5zM15 11A8 8 0 0 1 3 14.500Q10 15 15 11z" fill="#1c9a48" />
          <path d="M8 4v8M4 8h8" stroke="#159a43" strokeWidth="2.400" />
        </svg>
        <ToastBody />
      </Toast>
      <Notes viewBox="0 0 1626 934" preserveAspectRatio="none" fill={c.cyan} aria-hidden="true">
        <polygon points="827,352 828,352 824,520 818,783 824,784 813,805 802,783 808,783 821,520" />
        <polygon points="1482,432 1338,549 1341,554 1317,559 1329,537 1333,541" />
        <polygon points="615,837 1000,836 1439,836 1439,830 1460,841 1438,852 1438,846 1000,843 615,838" />
      </Notes>
    </Page>
  );
}
